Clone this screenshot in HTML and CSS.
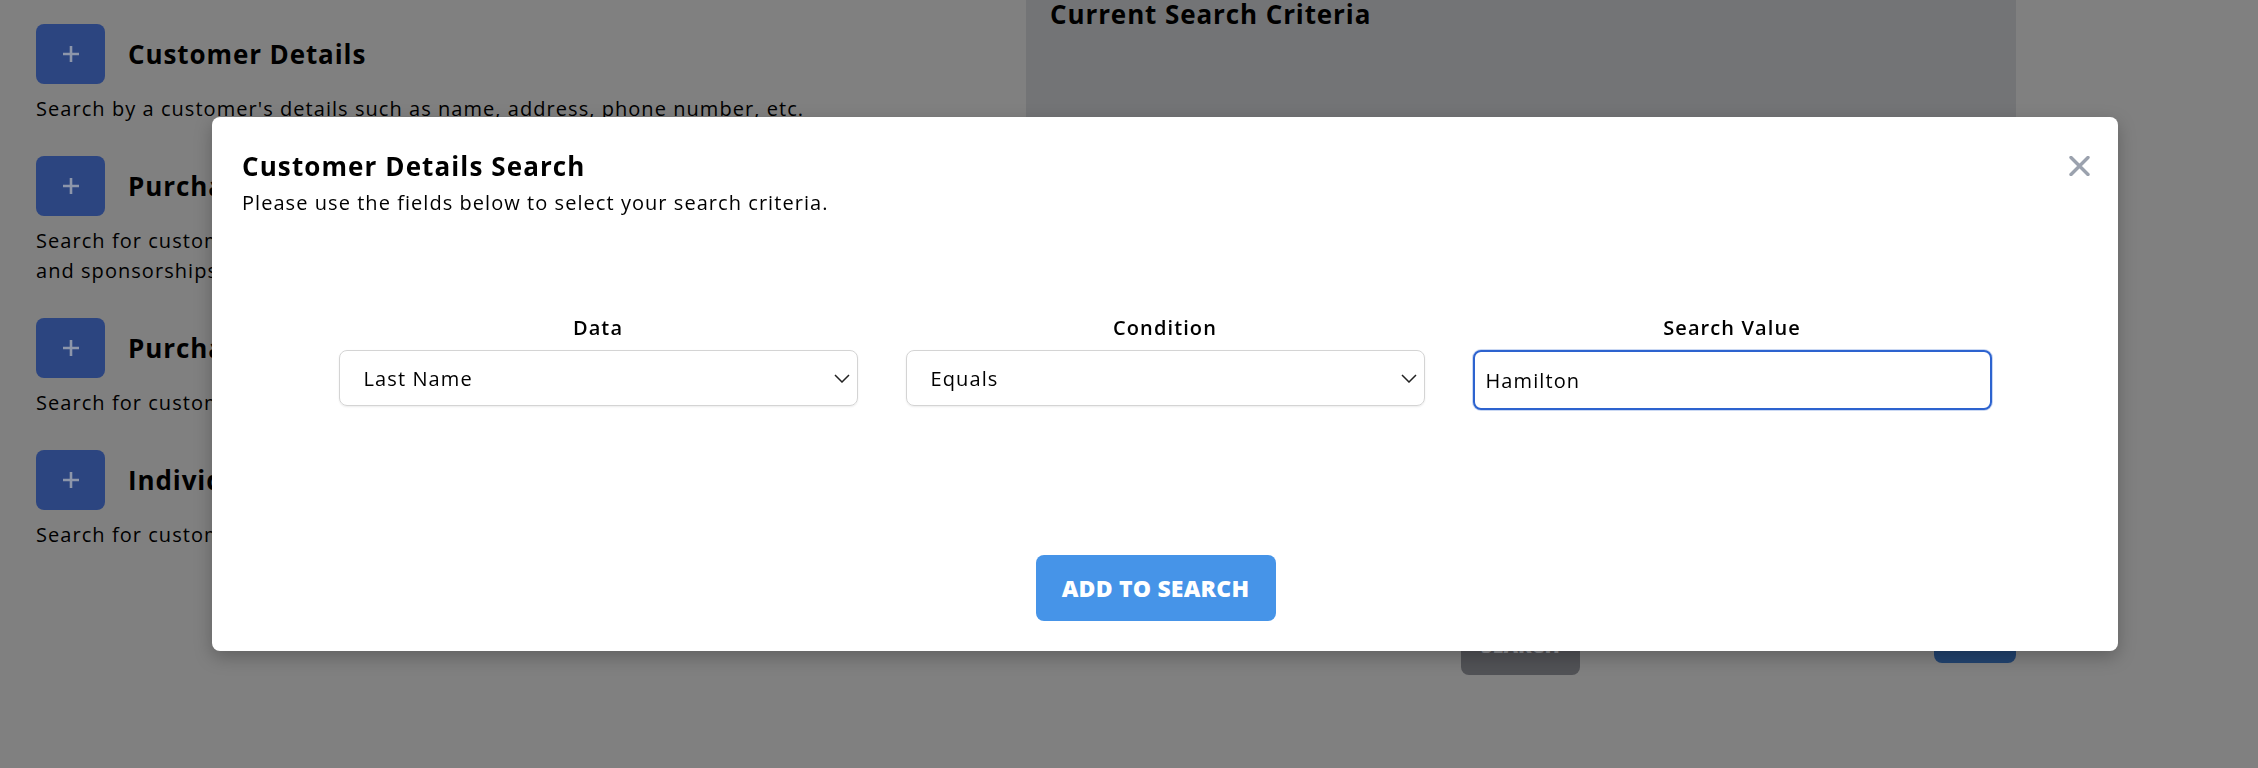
FILE: index.html
```html
<!DOCTYPE html>
<html lang="en">
<head>
<meta charset="utf-8">
<title>Customer Search</title>
<link rel="stylesheet" href="styles.css">
</head>
<body>
<div class="page">
  <div class="options">
    <div class="option">
      <div class="option-head">
        <span class="plus-btn"><svg width="18" height="18" viewBox="0 0 18 18"><path d="M9 1v16M1 9h16" stroke="currentColor" stroke-width="2.6"/></svg></span>
        <h2 class="option-title">Customer Details</h2>
      </div>
      <p class="option-desc">Search by a customer's details such as name, address, phone number, etc.</p>
    </div>
    <div class="option">
      <div class="option-head">
        <span class="plus-btn"><svg width="18" height="18" viewBox="0 0 18 18"><path d="M9 1v16M1 9h16" stroke="currentColor" stroke-width="2.6"/></svg></span>
        <h2 class="option-title">Purchased Products</h2>
      </div>
      <p class="option-desc">Search for customers by purchased items such as tickets, memberships, donations<br>and sponsorships.</p>
    </div>
    <div class="option">
      <div class="option-head">
        <span class="plus-btn"><svg width="18" height="18" viewBox="0 0 18 18"><path d="M9 1v16M1 9h16" stroke="currentColor" stroke-width="2.6"/></svg></span>
        <h2 class="option-title">Purchase Dates</h2>
      </div>
      <p class="option-desc">Search for customers by the date of their purchases.</p>
    </div>
    <div class="option">
      <div class="option-head">
        <span class="plus-btn"><svg width="18" height="18" viewBox="0 0 18 18"><path d="M9 1v16M1 9h16" stroke="currentColor" stroke-width="2.6"/></svg></span>
        <h2 class="option-title">Individual Events</h2>
      </div>
      <p class="option-desc">Search for customers who attended an individual event.</p>
    </div>
  </div>
  <div class="criteria">
    <div class="criteria-panel">
      <h2 class="criteria-title">Current Search Criteria</h2>
    </div>
    <div class="criteria-actions">
      <span class="btn-gray">SEARCH</span>
      <span class="btn-dark">GO</span>
    </div>
  </div>
</div>

<div class="modal">
  <button class="modal-close" aria-label="Close"><svg width="21" height="20" viewBox="0 0 21 20"><path d="M2 1.5l17 17M19 1.5l-17 17" stroke="currentColor" stroke-width="3.4" stroke-linecap="round"/></svg></button>
  <h3 class="modal-title">Customer Details Search</h3>
  <p class="modal-sub">Please use the fields below to select your search criteria.</p>
  <div class="fields">
    <div class="field">
      <label class="field-label">Data</label>
      <div class="select"><span>Last Name</span><svg width="16" height="9" viewBox="0 0 16 9"><path d="M1 1l7 7 7-7" fill="none" stroke="#222" stroke-width="1.5"/></svg></div>
    </div>
    <div class="field">
      <label class="field-label">Condition</label>
      <div class="select"><span>Equals</span><svg width="16" height="9" viewBox="0 0 16 9"><path d="M1 1l7 7 7-7" fill="none" stroke="#222" stroke-width="1.5"/></svg></div>
    </div>
    <div class="field">
      <label class="field-label">Search Value</label>
      <input class="text-input" type="text" value="Hamilton">
    </div>
  </div>
  <div class="modal-actions">
    <button class="add-btn">ADD TO SEARCH</button>
  </div>
</div>
</body>
</html>
```

FILE: styles.css
```css
* { box-sizing: border-box; }
html, body { margin: 0; padding: 0; }
body {
  background: #808080;
  font-family: "Open Sans", "Liberation Sans", sans-serif;
  color: #000;
  width: 2258px;
  height: 768px;
  overflow: hidden;
}
.page {
  display: grid;
  grid-template-columns: 955px 990px;
  column-gap: 35px;
  padding-left: 36px;
}
.options { padding-top: 24px; }
.option { margin-bottom: 32px; }
.option-head {
  display: flex;
  align-items: center;
  gap: 23px;
  height: 60px;
}
.plus-btn {
  width: 69px;
  height: 60px;
  border-radius: 8px;
  background: #2c4580;
  color: #8d96aa;
  display: flex;
  align-items: center;
  justify-content: center;
}
.option-title {
  margin: 0;
  font-size: 26px;
  font-weight: 700;
  line-height: 36px;
  letter-spacing: 0.9px;
}
.option-desc {
  margin: 10px 0 0;
  font-size: 20px;
  line-height: 30px;
  letter-spacing: 1.05px;
  white-space: nowrap;
}
.criteria-panel {
  background: #737476;
  height: 590px;
  padding-left: 24px;
}
.criteria-title {
  margin: 0;
  font-size: 26px;
  font-weight: 700;
  line-height: 26px;
  letter-spacing: 0.9px;
  padding-top: 1px;
}
.criteria-actions {
  display: flex;
  align-items: flex-start;
  margin-top: 15px;
}
.btn-gray {
  margin-left: 435px;
  width: 119px;
  height: 70px;
  border-radius: 8px;
  background: #515256;
  color: #8a8b8f;
  font-weight: 800;
  font-size: 20px;
  display: flex;
  align-items: flex-end;
  justify-content: center;
  padding-bottom: 16px;
}
.btn-dark {
  margin-left: auto;
  width: 82px;
  height: 58px;
  border-radius: 8px;
  background: #22436f;
  color: #22436f;
}
.modal {
  position: fixed;
  left: 212px;
  top: 117px;
  width: 1906px;
  height: 534px;
  background: #fff;
  border-radius: 8px;
  box-shadow: 0 6px 18px rgba(0,0,0,0.25);
  padding: 30px;
  display: flex;
  flex-direction: column;
}
.modal-close {
  position: absolute;
  right: 28px;
  top: 39px;
  border: 0;
  background: none;
  padding: 0;
  color: #9ba2ae;
  width: 21px;
  height: 20px;
  display: flex;
}
.modal-title {
  margin: 0;
  font-size: 26px;
  font-weight: 700;
  line-height: 39px;
  letter-spacing: 1.1px;
}
.modal-sub {
  margin: 2px 0 0;
  font-size: 20px;
  line-height: 30px;
  letter-spacing: 1.05px;
}
.fields {
  display: grid;
  grid-template-columns: repeat(3, 519px);
  column-gap: 48px;
  justify-content: center;
  margin-top: 95px;
  align-items: start;
}
.field {
  display: flex;
  flex-direction: column;
  align-items: stretch;
}
.field-label {
  text-align: center;
  font-size: 20px;
  font-weight: 600;
  line-height: 30px;
  margin-bottom: 7px;
  letter-spacing: 1.1px;
}
.select {
  height: 56px;
  border: 1px solid #d4d4d4;
  border-radius: 8px;
  box-shadow: 0 1px 2px rgba(0,0,0,0.08);
  display: flex;
  align-items: center;
  justify-content: space-between;
  padding: 0 7px 0 24px;
  font-size: 20px;
  letter-spacing: 1.1px;
}
.text-input {
  height: 60px;
  border: 2px solid #2d63cf;
  border-radius: 8px;
  box-shadow: 0 0 0 1px rgba(45,99,207,0.25);
  padding: 0 11px;
  font-family: "Open Sans", "Liberation Sans", sans-serif;
  font-size: 20px;
  letter-spacing: 1.1px;
  color: #000;
  outline: none;
  width: 100%;
}
.modal-actions {
  margin-top: auto;
  display: flex;
  justify-content: center;
}
.add-btn {
  margin-right: 19px;
  width: 240px;
  height: 66px;
  border: 0;
  border-radius: 8px;
  background: #4694e8;
  color: #fff;
  font-family: "Open Sans", "Liberation Sans", sans-serif;
  font-weight: 800;
  font-size: 23px;
  letter-spacing: 0.2px;
  padding: 0;
}
```
